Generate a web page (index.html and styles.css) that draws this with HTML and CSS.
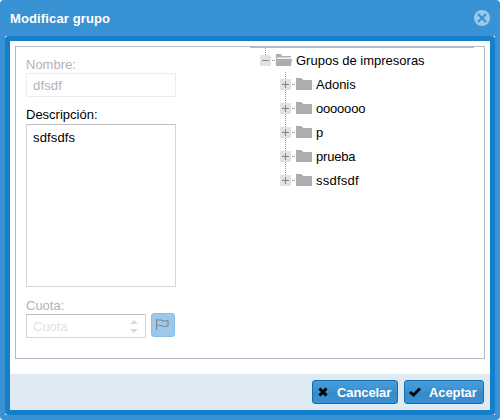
FILE: index.html
```html
<!DOCTYPE html>
<html lang="es">
<head>
<meta charset="utf-8">
<title>Modificar grupo</title>
<link rel="stylesheet" href="styles.css">
</head>
<body>
<svg class="defs" width="0" height="0">
  <symbol id="folder" viewBox="0 0 16 12"><path d="M0 0h5l1 1h1v1h9v10H0z" fill="#adadad"/></symbol>
  <symbol id="folder-open" viewBox="0 0 16 12"><path d="M0 0h5l1 2h9v1.500H0zM0 3h1v9H0zM1 5h15l-1 7H1z" fill="#adadad"/><path d="M1 3.500h14v1H1z" fill="#dcdcdc"/></symbol>
  <symbol id="plus" viewBox="0 0 15 11"><path d="M0 0h11v11H0z" fill="#dfe3e7"/><path d="M2 5.5h7M5.5 2v7" stroke="#858585"/><path d="M12 5.5h3" stroke="#888" stroke-dasharray="1 1"/></symbol>
  <symbol id="minus" viewBox="0 0 15 11"><path d="M0 0h11v11H0z" fill="#dfe3e7"/><path d="M2 5.5h7" stroke="#858585"/><path d="M12 5.5h3" stroke="#888" stroke-dasharray="1 1"/></symbol>
</svg>
<div class="window">
  <header class="titlebar">
    <h1 class="title">Modificar grupo</h1>
    <svg class="close" width="16" height="16" viewBox="0 0 16 16"><circle cx="8" cy="8" r="8" fill="#9bc8e9"/><path d="M4 4l8 8M12 4l-8 8" stroke="#3892d3" stroke-width="2.2"/></svg>
  </header>
  <div class="well">
  <div class="frame">
    <main class="body">
      <div class="panel">
        <form class="form">
          <div class="label muted">Nombre:</div>
          <div class="input name">dfsdf</div>
          <div class="label desc">Descripción:</div>
          <div class="input area">sdfsdfs</div>
          <div class="label muted quota-label">Cuota:</div>
          <div class="quota">
            <div class="input spinner"><span>Cuota</span>
              <svg width="8" height="13" viewBox="0 0 8 13"><path d="M0 4L4 0l4 4zM0 9h8l-4 4z" fill="#d9d9d9"/></svg>
            </div>
            <div class="flag"><svg width="14" height="13" viewBox="0 0 14 13"><path d="M.5 1v11" stroke="#7b8187"/><path d="M1 2.500c2-1.200 3.400-.7 5 0s3.500.6 6 0v5.500c-2.500.6-4.500.7-6 0s-3-1.200-5 0" fill="none" stroke="#7b8187"/></svg></div>
          </div>
        </form>
        <div class="tree">
          <div class="row root"><svg width="15" height="11"><use href="#minus"/></svg><svg class="folder" width="16" height="12"><use href="#folder-open"/></svg><span>Grupos de impresoras</span></div>
          <div class="row"><svg width="15" height="11"><use href="#plus"/></svg><svg class="folder" width="16" height="12"><use href="#folder"/></svg><span>Adonis</span></div>
          <div class="row"><svg width="15" height="11"><use href="#plus"/></svg><svg class="folder" width="16" height="12"><use href="#folder"/></svg><span class="snug">ooooooo</span></div>
          <div class="row"><svg width="15" height="11"><use href="#plus"/></svg><svg class="folder" width="16" height="12"><use href="#folder"/></svg><span>p</span></div>
          <div class="row"><svg width="15" height="11"><use href="#plus"/></svg><svg class="folder" width="16" height="12"><use href="#folder"/></svg><span class="snug">prueba</span></div>
          <div class="row last"><svg width="15" height="11"><use href="#plus"/></svg><svg class="folder" width="16" height="12"><use href="#folder"/></svg><span class="loose">ssdfsdf</span></div>
        </div>
      </div>
    </main>
    <footer class="footer">
      <div class="button cancel"><svg width="10" height="10" viewBox="0 0 10 10"><path d="M1.500 1.500l7 7M8.500 1.500l-7 7" stroke="#000" stroke-width="3"/></svg><span>Cancelar</span></div>
      <div class="button accept"><svg width="12" height="10" viewBox="0 0 12 10"><path d="M1 5l3.500 3L11 1.500" fill="none" stroke="#000" stroke-width="2.800"/></svg><span>Aceptar</span></div>
    </footer>
  </div>
  </div>
</div>
</body>
</html>
```

FILE: styles.css
```css
* { box-sizing: border-box; }
body { margin: 0; background: #fff; font: 13px/15px "Liberation Sans", Arial, sans-serif; color: #000; overflow: hidden; }
svg { display: block; flex: none; }
.defs { position: absolute; }
.window { width: 500px; height: 420px; padding: 0 5px 5px; background: #3892d4; border-radius: 4px; display: flex; flex-direction: column; }
.titlebar { height: 36px; flex: none; display: flex; align-items: center; justify-content: space-between; padding: 0 5px; }
.title { margin: 0; font-size: 13px; font-weight: bold; color: #fff; letter-spacing: .13px; }
.well { flex: 1; background: #fff; display: flex; }
.frame { flex: 1; border: 5px solid #157fcc; border-radius: 3px; background: #fff padding-box; display: flex; flex-direction: column; }
.body { height: 333px; padding: 5px; }
.panel { height: 313px; border: 1px solid #b5b8c8; display: flex; }
.form { width: 234px; flex: none; padding: 11px 0 0 10px; }
.label { height: 15px; line-height: 13px; }
.muted { color: #b2b2b2; }
.input { width: 150px; border: 1px solid #d6d6d6; border-top-color: #bebebe; background: #fff; padding: 0 6px; }
.name { height: 24px; line-height: 24px; color: #b2b2b2; border-color: #ececec; letter-spacing: .15px; }
.desc { margin-top: 11px; height: 16px; }
.area { height: 163px; padding-top: 5px; letter-spacing: .15px; }
.quota-label { margin-top: 12px; }
.quota { display: flex; gap: 5px; }
.spinner { width: 120px; height: 24px; padding-right: 7px; display: flex; align-items: center; justify-content: space-between; color: #e2e2e2; }
.flag { width: 24px; height: 24px; margin-top: -1px; padding: 4px 0 0 4px; border: 1px solid #88bfe6; border-radius: 3px; background: #9cc8e9; }
.tree { width: 224px; flex: none; border-top: 1px solid #b5b8c8; }
.row { height: 24px; display: flex; align-items: center; padding-left: 30px; background: repeating-linear-gradient(#999 0 1px, transparent 1px 2px) 35px 0 / 1px 24px no-repeat; }
.root { padding-left: 10px; background-position: 15px 0; background-size: 1px 12px; }
.last { background-size: 1px 12px; }
.snug { letter-spacing: -.2px; }
.loose { letter-spacing: .25px; }
.folder { margin: 0 4px 0 1px; }
.footer { flex: 1; background: #dfeaf2; display: flex; gap: 6px; align-items: center; justify-content: flex-end; padding-right: 6px; }
.button { height: 24px; border: 1px solid #126daf; border-radius: 3px; background: linear-gradient(#4b9cd7, #3892d3 50%, #358ac8 51%, #3892d3); color: #fff; font-weight: bold; display: flex; align-items: center; }
.button span { letter-spacing: -.1px; }
.cancel { width: 86px; padding-left: 5px; gap: 9px; }
.accept { width: 80px; padding-left: 4px; gap: 8px; }
```
